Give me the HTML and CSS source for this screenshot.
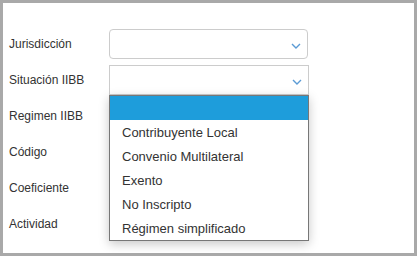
FILE: index.html
```html
<!DOCTYPE html>
<html>
<head>
  <title>Datos impositivos</title>
  <link rel="stylesheet" href="styles.css">
</head>
<body>
  <div class="panel">
    <div class="form-row">
      <label class="form-label">Jurisdicción</label>
      <div class="select-box">
        <svg class="chevron" width="10" height="6" viewBox="0 0 10 6"><path d="M1 1 L5 5 L9 1" /></svg>
      </div>
    </div>
    <div class="form-row">
      <label class="form-label">Situación IIBB</label>
      <div class="select-box open">
        <svg class="chevron" width="10" height="6" viewBox="0 0 10 6"><path d="M1 1 L5 5 L9 1" /></svg>
        <ul class="options">
          <li class="selected">&nbsp;</li>
          <li>Contribuyente Local</li>
          <li>Convenio Multilateral</li>
          <li>Exento</li>
          <li>No Inscripto</li>
          <li>Régimen simplificado</li>
        </ul>
      </div>
    </div>
    <div class="form-row">
      <label class="form-label">Regimen IIBB</label>
    </div>
    <div class="form-row">
      <label class="form-label">Código</label>
    </div>
    <div class="form-row">
      <label class="form-label">Coeficiente</label>
    </div>
    <div class="form-row">
      <label class="form-label">Actividad</label>
    </div>
  </div>
</body>
</html>
```

FILE: styles.css
```css
body {
  margin: 0;
  background: #fff;
  font-family: "Liberation Sans", Arial, sans-serif;
  color: #333;
}

.panel {
  box-sizing: border-box;
  width: 417px;
  height: 256px;
  border: 3px solid #a9a9a9;
  padding: 23px 0 0 6px;
}

.form-row {
  display: flex;
  align-items: center;
  height: 36px;
}

.form-label {
  width: 100px;
  font-size: 12px;
}

.select-box {
  position: relative;
  box-sizing: border-box;
  width: 199px;
  height: 30px;
  border: 1px solid #ccc;
  border-radius: 4px;
  background: #fff;
}

.select-box.open {
  width: 200px;
  border-radius: 0;
}

.chevron {
  position: absolute;
  right: 6px;
  top: 13px;
  fill: none;
  stroke: #5b9bd5;
  stroke-width: 1.4;
}

.options {
  position: absolute;
  top: 29px;
  left: -1px;
  width: 200px;
  box-sizing: border-box;
  margin: 0;
  padding: 0;
  list-style: none;
  background: #fff;
  border: 1px solid #777;
  box-shadow: 0 3px 10px rgba(0, 0, 0, 0.22);
  z-index: 2;
}

.options li {
  height: 24px;
  line-height: 26px;
  padding-left: 12px;
  font-size: 13px;
  color: #333;
}

.options li.selected {
  background: #1e9ddb;
}
```
